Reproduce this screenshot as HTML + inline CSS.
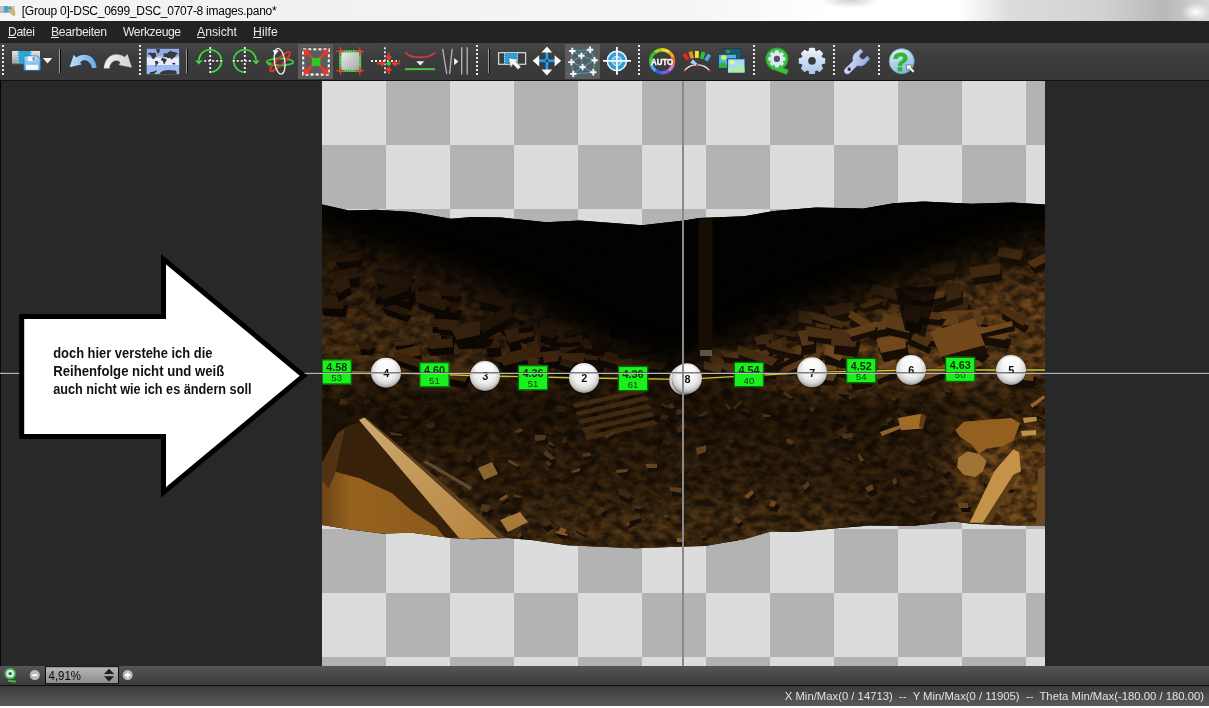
<!DOCTYPE html>
<html lang="de">
<head>
<meta charset="utf-8">
<title>[Group 0]-DSC_0699_DSC_0707-8 images.pano*</title>
<style>
html,body{margin:0;padding:0;}
body{width:1209px;height:708px;overflow:hidden;background:#282828;position:relative;font-family:"Liberation Sans","DejaVu Sans",sans-serif;}
.abs{position:absolute;}
svg,#title,.menu,#statustext{opacity:.999;}
#titlebar{left:0;top:0;width:1209px;height:21px;background:
 radial-gradient(ellipse 14px 9px at 1196px 12px,#ffffff 0%,rgba(255,255,255,0) 100%),
 radial-gradient(ellipse 30px 8px at 850px 0px,rgba(150,150,150,.45) 0%,rgba(120,120,120,0) 100%),
 linear-gradient(90deg,#f4f4f4 0px,#f1f1f1 300px,#f6f6f6 700px,#ffffff 830px,#ffffff 960px,#dcdcdc 1010px,#d2d2d2 1100px,#b8b8b8 1165px,#d8d8d8 1209px);}
#title{left:21.8px;top:4px;font-size:12px;color:#000;white-space:nowrap;letter-spacing:-0.26px;}
#menubar{left:0;top:21px;width:1209px;height:22px;background:#232323;}
.menu{position:absolute;top:4px;font-size:12.2px;color:#e8e8e8;white-space:nowrap;}
.menu u{text-decoration:underline;text-underline-offset:1px;}
#toolbar{left:0;top:43px;width:1209px;height:37px;background:linear-gradient(180deg,#474747,#3c3c3c 40%,#383838);border-bottom:1px solid #111;}
.sel{position:absolute;top:1px;height:35px;background:#5c5c5c;}
.grip{position:absolute;top:2px;width:2px;height:31px;background:repeating-linear-gradient(180deg,#e8e8e8 0px,#e8e8e8 2px,rgba(0,0,0,0) 2px,rgba(0,0,0,0) 4px);}
.sep{position:absolute;top:6px;width:1px;height:24px;background:#9a9a9a;border-right:1px solid #0c0c0c;}
#main{left:0;top:81px;width:1208px;height:585px;background:#282828;border-left:1px solid #050505;}
#canvas{left:322px;top:81px;width:723px;height:585px;overflow:hidden;
 background-color:#dcdcdc;
 background-image:conic-gradient(#b3b3b3 0 25%,#dcdcdc 0 50%,#b3b3b3 0 75%,#dcdcdc 0);
 background-size:128px 128px;background-position:0 0;}
#zoombar{left:0;top:666px;width:1209px;height:19px;background:linear-gradient(180deg,#555555,#3a3a3a);border-bottom:1px solid #0c0c0c;}
#status{left:0;top:686px;width:1209px;height:20px;background:linear-gradient(180deg,#3a3a3a,#5a5a5a);}
#statustext{right:5px;top:4px;font-size:11.3px;color:#e0e0e0;white-space:pre;}
#whitebot{left:0;top:706px;width:1209px;height:2px;background:#fff;}
</style>
</head>
<body>
<div id="titlebar" class="abs"></div>
<svg class="abs" style="left:0;top:0" width="20" height="21" viewBox="0 0 20 21">
<rect x="0" y="6" width="14.6" height="6.4" fill="#c4c4c4"/>
<rect x="3.8" y="6" width="4.6" height="6.4" fill="#34a8dc"/>
<rect x="0" y="11.6" width="12" height="1" fill="#9a9a9a"/>
<path d="M8.6,8 L10.4,6.6 L15,12.6 L14.6,15.4 L12,14.8 Z" fill="#d8c46a" stroke="#8a7a3a" stroke-width=".5"/>
<path d="M8.6,8 L10.4,6.6 L11.6,8.2 L9.8,9.6 Z" fill="#6a8a9a"/>
</svg>

<div id="title" class="abs">[Group 0]-DSC_0699_DSC_0707-8 images.pano*</div>
<div id="menubar" class="abs">
 <span class="menu" style="left:8px;letter-spacing:-0.4px"><u>D</u>atei</span>
 <span class="menu" style="left:51px;letter-spacing:-0.33px"><u>B</u>earbeiten</span>
 <span class="menu" style="left:123px;letter-spacing:-0.41px">Werkzeuge</span>
 <span class="menu" style="left:197px"><u>A</u>nsicht</span>
 <span class="menu" style="left:253px;letter-spacing:0.1px"><u>H</u>ilfe</span>
</div>
<div id="toolbar" class="abs">
 <div class="sel" style="left:298px;width:35px"></div>
 <div class="sel" style="left:565px;width:35px"></div>
 <div class="grip" style="left:2px"></div>
 <div class="grip" style="left:139px"></div>
 <div class="grip" style="left:476px"></div>
 <div class="grip" style="left:638px"></div>
 <div class="grip" style="left:753px"></div>
 <div class="grip" style="left:833px"></div>
 <div class="grip" style="left:878px"></div>
 <div class="sep" style="left:59px"></div>
 <div class="sep" style="left:186px"></div>
 <div class="sep" style="left:488px"></div>
 <svg class="abs" style="left:0;top:-43px" width="1209" height="81" viewBox="0 0 1209 81" font-family="'Liberation Sans',sans-serif">
<defs>
<linearGradient id="gfilm" x1="0" y1="0" x2="0" y2="1"><stop offset="0" stop-color="#e6e6e6"/><stop offset="1" stop-color="#9a9a9a"/></linearGradient>
<linearGradient id="gflop" x1="0" y1="0" x2="0" y2="1"><stop offset="0" stop-color="#a8d4f6"/><stop offset="1" stop-color="#6aaee8"/></linearGradient>
<linearGradient id="gundo" x1="0" y1="0" x2="1" y2="0"><stop offset="0" stop-color="#c4e0f4"/><stop offset="1" stop-color="#6ea8e0"/></linearGradient>
<linearGradient id="gredo" x1="0" y1="0" x2="1" y2="0"><stop offset="0" stop-color="#d4d4d4"/><stop offset="1" stop-color="#f0f0f0"/></linearGradient>
<linearGradient id="gcrop" x1="0" y1="0" x2="1" y2="1"><stop offset="0" stop-color="#ececec"/><stop offset="1" stop-color="#a4a4a4"/></linearGradient>
<linearGradient id="ggear" x1="0" y1="0" x2="0" y2="1"><stop offset="0" stop-color="#eef3fa"/><stop offset="1" stop-color="#a6c8ec"/></linearGradient>
<linearGradient id="gwr" x1="0" y1="0" x2="1" y2="1"><stop offset="0" stop-color="#e4eafa"/><stop offset="1" stop-color="#8ea6e4"/></linearGradient>
<linearGradient id="ghelp" x1="0" y1="0" x2="0.4" y2="1"><stop offset="0" stop-color="#e4f2fa"/><stop offset="1" stop-color="#8abce0"/></linearGradient>
</defs>
<g>
<rect x="12" y="51" width="28" height="13" fill="url(#gfilm)"/>
<rect x="17.6" y="51" width="14" height="13" fill="#2aa6d6"/>
<path d="M18,51V64M31.2,51V64" stroke="#dff6ff" stroke-width="1.2" stroke-dasharray="1.3 1.3" fill="none"/>
<rect x="12" y="63.2" width="28" height="1" fill="#7a7a7a"/>
<path d="M24,56 H37.3 L40.2,59 V70.2 H24 Z" fill="url(#gflop)" stroke="#3a78b8" stroke-width=".8"/>
<rect x="27.8" y="56.4" width="7.6" height="4.8" fill="#f2f8ff"/>
<rect x="32.6" y="56.8" width="2.2" height="3.8" fill="#808890"/>
<rect x="26" y="64.8" width="12.2" height="5" fill="#f4faff"/>
<path d="M42.8,58 H52.2 L47.5,63.4 Z" fill="#f4f4f4"/>
</g>
<path d="M68.9,67.8 L73.4,53.9 L76.3,57 C80.5,53.6 88,53.2 92.3,57.3 C95.6,60.5 97,64.5 97.1,68.6 L91.4,68.6 C91.2,65.2 89.6,62.2 86.6,61.1 C84.2,60.3 82.2,60.9 80.7,62.3 L82.2,64.9 Z" fill="url(#gundo)" stroke="#1c3c5c" stroke-width="1" stroke-linejoin="round"/>
<g transform="translate(200.9,0) scale(-1,1)"><path d="M68.9,67.8 L73.4,53.9 L76.3,57 C80.5,53.6 88,53.2 92.3,57.3 C95.6,60.5 97,64.5 97.1,68.6 L91.4,68.6 C91.2,65.2 89.6,62.2 86.6,61.1 C84.2,60.3 82.2,60.9 80.7,62.3 L82.2,64.9 Z" fill="url(#gredo)" stroke="#5a5a5a" stroke-opacity=".5" stroke-width=".6" stroke-linejoin="round"/></g>
<g>
<rect x="146.8" y="48.8" width="32.3" height="25.3" fill="#8fadea"/>
<rect x="146.8" y="57.4" width="32.3" height="7.8" fill="#e6ecfb"/>
<rect x="146.8" y="65.2" width="32.3" height="8.9" fill="#9fbcf0"/>
<rect x="146.8" y="56.4" width="32.3" height="1.2" fill="#b8caf2"/>
<path d="M147.9,53.2 L150.6,52.6 L152.8,53.2 L154.5,52.6 L156.3,53.7 L155.8,55.4 L156.7,56.5 L154.9,57.2 L154.5,58.7 L153.2,59.1 L151.9,58.3 L151.2,56.1 L149.7,54.8 L148.2,54.3Z M155.8,49.3 L159.8,49.1 L159.8,50.8 L158.9,53.0 L157.6,53.4 L156.7,51.3Z M154.9,61.1 L157.1,60.9 L158.7,62.2 L158.0,63.5 L156.9,64.8 L156.0,66.6 L155.2,66.6 L155.6,64.4 L155.2,62.6Z M162.8,53.9 L164.6,53.2 L166.8,53.4 L168.5,52.1 L170.7,50.8 L172.4,51.7 L174.6,52.1 L177.7,53.2 L177.9,54.1 L175.9,54.8 L175.5,56.5 L173.8,57.4 L172.4,59.1 L171.1,59.6 L170.3,57.8 L168.5,58.3 L166.8,57.4 L165.4,56.9 L162.8,56.5 L164.1,55.4Z M161.1,59.1 L162.4,57.8 L164.6,58.5 L166.3,59.1 L166.8,60.4 L165.7,61.3 L165.0,63.5 L163.9,64.2 L163.3,62.6 L162.8,60.9 L161.3,60.4Z M172.0,63.5 L173.8,62.6 L175.3,63.3 L175.3,64.6 L172.9,64.6Z M159.3,74.0 L161.1,71.8 L164.1,70.5 L168.5,70.1 L172.0,70.3 L175.5,70.5 L176.6,71.8 L176.6,74.0Z M149.3,74.0 L150.1,72.3 L154.1,71.6 L156.7,70.1 L156.5,71.8 L154.9,73.1 L154.5,74.0Z " fill="#38393e"/>
</g><g transform="translate(210.2,60.9) scale(1,1)">
<path d="M-11.3,1.5 A11.3,11.3 0 1 1 1,11.3" fill="none" stroke="#175a17" stroke-width="2.9" stroke-opacity=".55"/>
<path d="M-11.3,1.5 A11.3,11.3 0 1 1 1,11.3" fill="none" stroke="#4cd44c" stroke-width="1.7"/>
<path d="M-14,0H14M0,-14V14" stroke="#1e1e1e" stroke-opacity=".4" stroke-width="3.0999999999999996" stroke-dasharray="2 2" fill="none"/>
<path d="M-14,0H14M0,-14V14" stroke="#f2f2f2" stroke-width="1.9" stroke-dasharray="2 2" fill="none"/>
<path d="M-14.9,-0.4 L-7.9,-0.4 L-11.3,4.2 Z" fill="#4cd44c" stroke="#175a17" stroke-width=".5"/>
</g>
<g transform="translate(244.8,60.9) scale(-1,1)">
<path d="M-11.3,1.5 A11.3,11.3 0 1 1 1,11.3" fill="none" stroke="#175a17" stroke-width="2.9" stroke-opacity=".55"/>
<path d="M-11.3,1.5 A11.3,11.3 0 1 1 1,11.3" fill="none" stroke="#4cd44c" stroke-width="1.7"/>
<path d="M-14,0H14M0,-14V14" stroke="#1e1e1e" stroke-opacity=".4" stroke-width="3.0999999999999996" stroke-dasharray="2 2" fill="none"/>
<path d="M-14,0H14M0,-14V14" stroke="#f2f2f2" stroke-width="1.9" stroke-dasharray="2 2" fill="none"/>
<path d="M-14.9,-0.4 L-7.9,-0.4 L-11.3,4.2 Z" fill="#4cd44c" stroke="#175a17" stroke-width=".5"/>
</g>
<g fill="none">
<ellipse cx="280" cy="62" rx="13.2" ry="3.5" stroke="#3cc83c" stroke-width="1.8"/>
<ellipse cx="280" cy="61.6" rx="13.4" ry="3.2" stroke="#dc3828" stroke-width="1.9" transform="rotate(-44 280 61.6)"/>
<ellipse cx="279.6" cy="61.2" rx="5.2" ry="13" stroke="#f4f4f4" stroke-width="1.25" transform="rotate(-8 279.6 61.2)"/>
<path d="M272.6,50 L278.8,50.6 L275.2,55 Z" fill="#f8f8f8"/>
<path d="M266.6,62 L271.8,62.4 L268.8,66.6 Z" fill="#3cc83c"/>
</g>
<path d="M303.2,49.3 H328.8 V74.5 H303.2 Z" stroke="#1e1e1e" stroke-opacity=".4" stroke-width="3.5" stroke-dasharray="3 2.08" fill="none"/>
<path d="M303.2,49.3 H328.8 V74.5 H303.2 Z" stroke="#f2f2f2" stroke-width="2.3" stroke-dasharray="3 2.08" fill="none"/>
<g stroke="#e8392e" stroke-width="2.6" fill="#e8392e">
<path d="M312.6,58.4L307.5,53.3"/>
<path d="M303.5,49.3 L310.9,50.099999999999994 L304.3,56.699999999999996 Z" stroke="none"/>
<path d="M319.6,58.4L324.70000000000005,53.3"/>
<path d="M328.70000000000005,49.3 L321.30000000000007,50.099999999999994 L327.90000000000003,56.699999999999996 Z" stroke="none"/>
<path d="M312.6,65.4L307.5,70.5"/>
<path d="M303.5,74.5 L310.9,73.7 L304.3,67.1 Z" stroke="none"/>
<path d="M319.6,65.4L324.70000000000005,70.5"/>
<path d="M328.70000000000005,74.5 L321.30000000000007,73.7 L327.90000000000003,67.1 Z" stroke="none"/>
</g>
<rect x="311.9" y="57.9" width="8.5" height="8" fill="#2fca1e"/>
<rect x="340.3" y="51.4" width="19.8" height="19.4" fill="url(#gcrop)" stroke="#5cdc5c" stroke-width="2.2"/>
<path d="M340.3,51.4 H360.1 V70.8 H340.3 Z" fill="none" stroke="#1c5a1c" stroke-width="2.2" stroke-dasharray="0.8 1.6"  stroke-opacity=".5"/>
<path d="M336,51.4H344.6M340.6,47V55.4 M355.6,51.4H364M359.8,47V55.4 M336,70.6H344.6M340.6,66.4V75 M355.6,70.6H364M359.8,66.4V75" stroke="#e8392e" stroke-width="1.2" fill="none"/>
<path d="M371,61H399.4M385,47.2V74.8" stroke="#1e1e1e" stroke-opacity=".4" stroke-width="3.0" stroke-dasharray="2 2" fill="none"/>
<path d="M371,61H399.4M385,47.2V74.8" stroke="#f2f2f2" stroke-width="1.8" stroke-dasharray="2 2" fill="none"/>
<g fill="#e8392e">
<path d="M385.09999999999997,56.3 h7.2 l-3.6,4.6 Z M387.59999999999997,52.9 h2.2 v4 h-2.2Z"/>
<path d="M385.09999999999997,70.7 h7.2 l-3.6,-4.6 Z M387.59999999999997,74.1 h2.2 v-4 h-2.2Z"/>
<path d="M381.3,59.9 v7.2 l4.6,-3.6 Z M376.9,62.4 v2.2 h5 v-2.2Z"/>
<path d="M396.09999999999997,59.9 v7.2 l-4.6,-3.6 Z M399.7,62.4 v2.2 h-4 v-2.2Z"/>
</g>
<circle cx="388.7" cy="63.5" r="2.2" fill="#36c836"/>
<path d="M405.8,52.8 C411,58.8 429,58.8 434.4,52.8" fill="none" stroke="#c83c3c" stroke-width="2" stroke-linecap="round"/>
<path d="M416.2,61.2 H424.2 L420.2,65.6 Z" fill="#f6f6f6"/>
<rect x="405" y="68.2" width="30" height="1.9" fill="#44cc44"/>
<path d="M442.6,48.8 L446.8,74 M452.2,48.8 L449.6,74 M461.7,47.2 V74.4 M467.2,47.2 V74.4" stroke="#b0b0b0" stroke-width="1.4" fill="none"/>
<path d="M454.1,58 L458.4,61.6 L454.1,65.3 Z" fill="#f6f6f6"/><rect x="498.6" y="52.7" width="27" height="11.6" fill="#3a3a3a" stroke="#d0d0d0" stroke-width="1.3"/>
<rect x="504.2" y="53.3" width="13.6" height="10.4" fill="#28a0e0"/>
<path d="M504.6,53.3V63.7M517.4,53.3V63.7" stroke="#e6f6ff" stroke-width="1" stroke-dasharray="1.2 1.2" fill="none"/>
<path d="M508.6,58 L518.6,59.4 L516,61.6 L520.8,67 L518,69.6 L513,64.2 L510.6,67.4 Z" fill="#f8f8f8" stroke="#555" stroke-width=".5"/>
<path d="M539,60.8H555M546.9,52V70" stroke="#1a3a50" stroke-width="4.4" fill="none"/>
<path d="M539,60.8H555M546.9,52V70" stroke="#2b9ad8" stroke-width="3" fill="none"/>
<path d="M546.9,46.4 L552.3,52.4 H541.5Z M546.9,75.4 L552.3,69.4 H541.5Z M532.6,60.8 L539.2,55.199999999999996 V66.39999999999999Z M561.2,60.8 L554.6,55.199999999999996 V66.39999999999999Z" fill="#f8f8f8"/>
<rect x="545.9" y="59.8" width="2" height="2" fill="#0c2a40"/>
<path d="M572.3,51L590.1,49.8M572.3,51L581.4,55.7M590.1,49.8L581.4,55.7M572.3,51L571.4,62.1M581.4,55.7L571.4,62.1M581.4,55.7L594.6,60.3M590.1,49.8L594.6,60.3M571.4,62.1L582.6,67.1M594.6,60.3L582.6,67.1M571.4,62.1L573.3,73.9M582.6,67.1L573.3,73.9M582.6,67.1L593.3,72.3M594.6,60.3L593.3,72.3M573.3,73.9L593.3,72.3M581.4,55.7L582.6,67.1" stroke="#3d9cc8" stroke-width="1.1" fill="none"/>
<path d="M569.0999999999999,51H575.5M572.3,47.8V54.2M586.9,49.8H593.3000000000001M590.1,46.599999999999994V53.0M578.1999999999999,55.7H584.6M581.4,52.5V58.900000000000006M568.1999999999999,62.1H574.6M571.4,58.9V65.3M591.4,60.3H597.8000000000001M594.6,57.099999999999994V63.5M579.4,67.1H585.8000000000001M582.6,63.89999999999999V70.3M570.0999999999999,73.9H576.5M573.3,70.7V77.10000000000001M590.0999999999999,72.3H596.5M593.3,69.1V75.5" stroke="#fafafa" stroke-width="1.9" fill="none"/>
<circle cx="616.9" cy="60.9" r="9.6" fill="#2e9ed8" stroke="#e8f8ff" stroke-width="1.5"/>
<circle cx="616.9" cy="60.9" r="4.6" fill="#56b4e2" stroke="#c8ecfc" stroke-width="1.3"/>
<path d="M603,60.9H631M616.9,47V74.8" stroke="#f4fcff" stroke-width="1.9" fill="none"/>
<path d="M661.90,49.70 A11.5,11.5 0 0 1 669.02,52.02" stroke="#f0e020" stroke-width="3.4" fill="none"/>
<path d="M668.70,51.78 A11.5,11.5 0 0 1 673.10,57.84" stroke="#f0a828" stroke-width="3.4" fill="none"/>
<path d="M672.97,57.46 A11.5,11.5 0 0 1 672.97,64.94" stroke="#f06a28" stroke-width="3.4" fill="none"/>
<path d="M673.10,64.56 A11.5,11.5 0 0 1 668.70,70.62" stroke="#d878d8" stroke-width="3.4" fill="none"/>
<path d="M669.02,70.38 A11.5,11.5 0 0 1 661.90,72.70" stroke="#7a60e0" stroke-width="3.4" fill="none"/>
<path d="M662.30,72.70 A11.5,11.5 0 0 1 655.18,70.38" stroke="#3060e0" stroke-width="3.4" fill="none"/>
<path d="M655.50,70.62 A11.5,11.5 0 0 1 651.10,64.56" stroke="#4aa8f0" stroke-width="3.4" fill="none"/>
<path d="M651.23,64.94 A11.5,11.5 0 0 1 651.23,57.46" stroke="#38c848" stroke-width="3.4" fill="none"/>
<path d="M651.10,57.84 A11.5,11.5 0 0 1 655.50,51.78" stroke="#38c020" stroke-width="3.4" fill="none"/>
<path d="M655.18,52.02 A11.5,11.5 0 0 1 662.30,49.70" stroke="#a0d820" stroke-width="3.4" fill="none"/>
<text x="662.1" y="64.5" font-size="9.2" font-weight="bold" fill="#fff" text-anchor="middle" textLength="22.4" lengthAdjust="spacingAndGlyphs" stroke="#fff" stroke-width=".35">AUTO</text>
<rect x="684.1" y="53.1" width="3.8" height="7" fill="#e8281e" transform="rotate(-32 686 56.6)"/>
<rect x="689.4" y="51.4" width="3.8" height="7" fill="#f08a28" transform="rotate(-16 691.3 54.9)"/>
<rect x="695.0" y="50.9" width="3.8" height="7" fill="#f4e628" transform="rotate(0 696.9 54.4)"/>
<rect x="700.7" y="51.8" width="3.8" height="7" fill="#34c034" transform="rotate(16 702.6 55.3)"/>
<rect x="705.8000000000001" y="54.1" width="3.8" height="7" fill="#48a8e0" transform="rotate(32 707.7 57.6)"/>
<path d="M684.2,70.8 C688,66 692,64.6 697,64.8 C702,64.6 706,66 709.8,70.8" stroke="#f4f4f4" stroke-width="1.3" fill="none"/>
<circle cx="684.4" cy="70.8" r="1.2" fill="#c82828"/><circle cx="709.6" cy="70.8" r="1.2" fill="#c82828"/>
<path d="M690.2,62.8 L692.8,59.2 L698.2,64.4 L697,66.2 Z" fill="#b8c6ee"/>
<circle cx="697.2" cy="65.2" r="1.2" fill="#c83a3a"/>
<rect x="723.4" y="48.6" width="17.6" height="12" fill="#1d5a6e" stroke="#143c48" stroke-width=".8"/>
<circle cx="728" cy="51.6" r="1.7" fill="#7a8a2a"/>
<rect x="718.6" y="54.2" width="18" height="13.8" fill="#48b6e8" stroke="#174654" stroke-width="1"/>
<circle cx="723.8" cy="57.6" r="2.5" fill="#e4f23a"/>
<path d="M719.1,67.5 V64.6 C721.5,62 724,62 726.6,64.4 L729,67.5 Z" fill="#34b43c"/>
<rect x="727.6" y="58.8" width="17.4" height="14.2" fill="#a6dcf2" stroke="#174654" stroke-width="1"/>
<circle cx="732" cy="62.2" r="2.3" fill="#f2f4a0"/>
<path d="M728.1,72.5 V68.4 C730,66.6 732,67 734,68.4 C736,66 738.4,64 741,65.2 L744.5,67.6 V72.5 Z" fill="#b2e8aa"/><path d="M771.6,66.4 L787.6,72.2" stroke="#1f8a28" stroke-width="5.6" fill="none"/>
<circle cx="776.9" cy="58.9" r="11.2" fill="#3cc040" stroke="#1f8a28" stroke-width=".8"/>
<path d="M771.6,66.4 L787.4,72.1" stroke="#3cc040" stroke-width="4.4" fill="none"/>
<path d="M775.49,50.82 L778.31,50.82 L778.51,52.81 L780.06,53.45 L781.62,52.19 L783.61,54.18 L782.35,55.74 L782.99,57.29 L784.98,57.49 L784.98,60.31 L782.99,60.51 L782.35,62.06 L783.61,63.62 L781.62,65.61 L780.06,64.35 L778.51,64.99 L778.31,66.98 L775.49,66.98 L775.29,64.99 L773.74,64.35 L772.18,65.61 L770.19,63.62 L771.45,62.06 L770.81,60.51 L768.82,60.31 L768.82,57.49 L770.81,57.29 L771.45,55.74 L770.19,54.18 L772.18,52.19 L773.74,53.45 L775.29,52.81Z M773.8,58.9 a3.1,3.1 0 1 0 6.2,0 a3.1,3.1 0 1 0 -6.2,0Z" fill="#dde9f8" fill-rule="evenodd" stroke-linejoin="round" stroke="#dde9f8" stroke-width="1"/>
<circle cx="776.9" cy="58.9" r="3.1" fill="#505458"/>
<path d="M809.83,48.49 L814.17,48.49 L814.56,51.23 L817.02,52.25 L819.25,50.59 L822.31,53.65 L820.65,55.88 L821.67,58.34 L824.41,58.73 L824.41,63.07 L821.67,63.46 L820.65,65.92 L822.31,68.15 L819.25,71.21 L817.02,69.55 L814.56,70.57 L814.17,73.31 L809.83,73.31 L809.44,70.57 L806.98,69.55 L804.75,71.21 L801.69,68.15 L803.35,65.92 L802.33,63.46 L799.59,63.07 L799.59,58.73 L802.33,58.34 L803.35,55.88 L801.69,53.65 L804.75,50.59 L806.98,52.25 L809.44,51.23Z M807.4,60.9 a4.6,4.6 0 1 0 9.2,0 a4.6,4.6 0 1 0 -9.2,0Z" fill="url(#ggear)" fill-rule="evenodd" stroke-linejoin="round" stroke="url(#ggear)" stroke-width="1.6"/>
<g transform="translate(845,73.2) rotate(-44)">
<path d="M3.3,-3.3 H14 C15.5,-5.5 17.5,-7.4 20.5,-7.6 L28,-7 L28.2,-3 L23.5,-2.8 C21.2,-2 21.2,2 23.5,2.8 L28.2,3 L28,7 L20.5,7.6 C17.5,7.4 15.5,5.5 14,3.3 H3.3 C-1.1,3.3 -1.1,-3.3 3.3,-3.3 Z" fill="url(#gwr)" stroke="#56648e" stroke-width=".5" stroke-linejoin="round"/>
<circle cx="5.8" cy="0" r="1.7" fill="#34363c"/>
</g>
<circle cx="901.7" cy="61.2" r="12.6" fill="url(#ghelp)" stroke="#6a90a8" stroke-width=".8"/>
<text x="900.5" y="70.6" font-size="26.5" font-weight="bold" fill="#2cb82c" stroke="#2cb82c" stroke-width=".9" text-anchor="middle">?</text>
<path d="M906,64.6 L912.6,65.4 L910.8,67 L914.6,71 L912.8,72.8 L909,68.8 L907.2,70.8 Z" fill="#fafafa" stroke="#444" stroke-width=".6" stroke-linejoin="round"/>
</svg>
</div>
<div id="main" class="abs"></div>
<div id="canvas" class="abs">

</div>
<svg class="abs" style="left:0;top:0" width="1209" height="708" viewBox="0 0 1209 708">
<defs>
<clipPath id="panoclip"><path d="M322,204.4 L349,210.4 L376,209.8 L412,212 L451,218.7 L472,217 L501.6,217.5 L546.5,222.3 L579.5,220.5 L642,225.3 L684,220.5 L699,218 L744,216.3 L774,211 L816,207.4 L863.6,208.6 L893.6,203.2 L923.5,201.4 L971.4,203.8 L1013,202.6 L1045,204.4
 L1045,525.5 L1013,525.5 L971.4,523.8 L953.5,521.4 L911.5,526 L869.6,525.5 L834,528.5 L795,532 L771,531.5 L744,539.3 L705,546 L684,546.5 L636,548.3 L606.4,547 L567.5,545.3 L531.6,540 L507.6,538 L472,539.3 L451,538 L412,532.8 L382,533.4 L352,529.8 L322,525 Z"/></clipPath>
<filter id="b20" color-interpolation-filters="sRGB" x="-30%" y="-30%" width="160%" height="160%"><feGaussianBlur stdDeviation="16"/></filter>
<filter id="b1" color-interpolation-filters="sRGB" x="-5%" y="-5%" width="110%" height="110%"><feGaussianBlur stdDeviation="0.7"/></filter>
<filter id="tex" x="0" y="0" width="100%" height="100%" color-interpolation-filters="sRGB">
 <feTurbulence type="fractalNoise" baseFrequency="0.09 0.13" numOctaves="3" seed="7" result="n"/>
 <feColorMatrix in="n" type="matrix" values="2.2 0 0 0 -0.6  2.2 0 0 0 -0.6  2.2 0 0 0 -0.6  0 0 0 0 1" result="g"/>
 <feComposite in="SourceGraphic" in2="g" operator="arithmetic" k1="0.9" k2="0.55" k3="0" k4="0"/>
</filter>
<!-- brightness mask for rubble slabs: same shape as base light -->
<mask id="lm" maskUnits="userSpaceOnUse" x="322" y="195" width="723" height="360">
 <g filter="url(#b20)">
  <polygon points="280,222 442,268 501,292 561,322 609,350 657,366 681,366 705,352 741,334 800,310 860,288 920,268 980,248 1080,220 1080,600 280,600" fill="#fff"/>
 </g>
</mask>
</defs>
<g clip-path="url(#panoclip)">
<rect x="322" y="195" width="723" height="360" fill="#020201"/>
<g filter="url(#tex)">
<rect x="322" y="195" width="723" height="360" fill="#020201"/>
<g filter="url(#b20)">
<polygon points="280,225 442,272 501,295 561,326 609,354 657,368 681,368 705,356 741,337 800,313 860,292 920,272 980,252 1080,225 1080,600 280,600" fill="#261809"/>
<polygon points="280,300 430,315 540,372 280,385" fill="#38240f"/>
<polygon points="770,368 860,322 960,288 1080,272 1080,388 770,392" fill="#4c3013"/>
<polygon points="300,468 420,478 500,552 300,560" fill="#6e461a"/>
<polygon points="950,410 1080,410 1080,540 965,540" fill="#553614"/>
<polygon points="520,505 860,500 860,560 520,560" fill="#38250e"/>
<polygon id="darkband" points="300,392 1080,388 1080,432 300,436" fill="#0c0703" fill-opacity=".45"/>
</g>
</g>
<g mask="url(#lm)" filter="url(#b1)">
<polygon points="458,338 495,337 493,348 459,349" fill="#0c0703"/>
<polygon points="456,332 494,330 491,341 458,343" fill="#2f1c0b"/>
<polygon points="591,362 605,364 602,377 592,375" fill="#0c0703"/>
<polygon points="589,353 604,355 601,367 590,366" fill="#3f260f"/>
<polygon points="321,304 348,305 346,317 324,316" fill="#0c0703"/>
<polygon points="320,295 345,296 343,309 321,308" fill="#2c1b0b"/>
<polygon points="555,338 574,340 571,348 554,346" fill="#0c0703"/>
<polygon points="552,332 572,335 570,343 553,340" fill="#1e1207"/>
<polygon points="612,359 652,362 647,369 616,366" fill="#0c0703"/>
<polygon points="610,353 650,356 645,363 615,360" fill="#221408"/>
<polygon points="399,280 415,279 413,292 400,292" fill="#0c0703"/>
<polygon points="397,272 413,271 411,284 398,284" fill="#1a1006"/>
<polygon points="379,290 416,298 411,311 375,304" fill="#0c0703"/>
<polygon points="376,282 415,289 408,302 374,296" fill="#211408"/>
<polygon points="399,355 420,346 422,354 404,361" fill="#0c0703"/>
<polygon points="397,350 418,341 419,348 402,356" fill="#29190a"/>
<polygon points="511,363 528,366 525,373 510,371" fill="#0c0703"/>
<polygon points="508,358 526,361 523,368 507,366" fill="#452911"/>
<polygon points="519,340 535,336 534,341 521,344" fill="#0c0703"/>
<polygon points="517,336 533,331 533,336 519,340" fill="#35200d"/>
<polygon points="331,281 360,277 359,287 338,289" fill="#0c0703"/>
<polygon points="330,272 358,268 357,278 336,281" fill="#261709"/>
<polygon points="441,333 457,339 454,346 441,340" fill="#0c0703"/>
<polygon points="440,327 456,333 453,340 438,334" fill="#39220e"/>
<polygon points="554,371 569,372 568,384 555,383" fill="#0c0703"/>
<polygon points="552,364 567,364 566,376 553,376" fill="#3b240e"/>
<polygon points="545,359 581,370 576,375 544,365" fill="#0c0703"/>
<polygon points="543,353 579,364 574,369 542,359" fill="#3b240e"/>
<polygon points="515,347 530,352 527,361 512,356" fill="#0c0703"/>
<polygon points="512,339 528,345 524,353 511,348" fill="#3d250f"/>
<polygon points="563,328 592,331 590,340 563,338" fill="#0c0703"/>
<polygon points="561,322 591,325 588,334 561,331" fill="#190f06"/>
<polygon points="376,278 413,286 408,298 378,291" fill="#0c0703"/>
<polygon points="374,270 410,279 405,290 375,283" fill="#211408"/>
<polygon points="443,335 465,341 463,345 442,339" fill="#0c0703"/>
<polygon points="442,330 463,336 461,340 441,335" fill="#2f1d0b"/>
<polygon points="382,307 412,316 407,322 386,315" fill="#0c0703"/>
<polygon points="381,300 410,310 406,316 383,308" fill="#261709"/>
<polygon points="499,330 533,324 534,331 504,336" fill="#0c0703"/>
<polygon points="497,325 532,320 531,327 502,331" fill="#1f1307"/>
<polygon points="518,360 552,348 551,363 527,371" fill="#0c0703"/>
<polygon points="516,351 549,339 550,354 526,362" fill="#37210d"/>
<polygon points="427,348 454,345 454,354 431,356" fill="#0c0703"/>
<polygon points="424,341 452,338 453,347 430,349" fill="#3a230e"/>
<polygon points="524,367 548,373 545,380 525,374" fill="#0c0703"/>
<polygon points="523,359 546,366 542,373 523,367" fill="#452a11"/>
<polygon points="548,336 585,337 581,349 548,348" fill="#0c0703"/>
<polygon points="546,327 583,328 580,339 547,338" fill="#2d1b0b"/>
<polygon points="497,364 521,353 519,358 501,366" fill="#0c0703"/>
<polygon points="495,359 519,349 518,354 499,362" fill="#3e250f"/>
<polygon points="555,362 587,368 578,383 553,379" fill="#0c0703"/>
<polygon points="553,353 585,359 576,374 550,370" fill="#37210d"/>
<polygon points="600,356 621,360 618,370 597,366" fill="#0c0703"/>
<polygon points="598,350 619,354 616,364 595,359" fill="#37210d"/>
<polygon points="486,346 500,346 502,357 488,357" fill="#0c0703"/>
<polygon points="484,337 499,337 499,348 487,348" fill="#301d0c"/>
<polygon points="636,374 657,373 658,380 640,381" fill="#0c0703"/>
<polygon points="634,367 655,366 656,374 637,374" fill="#2f1c0b"/>
<polygon points="360,347 376,348 373,355 361,355" fill="#0c0703"/>
<polygon points="359,342 373,342 371,350 359,349" fill="#2e1c0b"/>
<polygon points="395,292 422,288 420,297 400,300" fill="#0c0703"/>
<polygon points="392,286 420,282 418,291 397,294" fill="#211408"/>
<polygon points="522,363 543,367 538,379 519,375" fill="#0c0703"/>
<polygon points="521,355 540,359 535,371 517,367" fill="#412710"/>
<polygon points="395,346 414,344 412,350 397,351" fill="#0c0703"/>
<polygon points="392,342 413,340 411,345 395,346" fill="#3d250f"/>
<polygon points="622,374 639,374 639,382 626,382" fill="#0c0703"/>
<polygon points="621,367 638,367 637,375 624,375" fill="#442911"/>
<polygon points="509,314 526,322 522,326 509,319" fill="#0c0703"/>
<polygon points="507,308 524,316 520,320 507,314" fill="#28180a"/>
<polygon points="470,335 494,339 490,347 470,343" fill="#0c0703"/>
<polygon points="468,327 493,332 489,340 469,336" fill="#211408"/>
<polygon points="481,298 518,307 511,317 480,309" fill="#0c0703"/>
<polygon points="479,289 515,299 509,309 478,301" fill="#201408"/>
<polygon points="618,363 649,375 646,383 615,373" fill="#0c0703"/>
<polygon points="615,355 647,366 643,375 614,364" fill="#321e0c"/>
<polygon points="432,324 447,323 447,333 433,333" fill="#0c0703"/>
<polygon points="430,318 445,317 444,327 431,327" fill="#2f1c0b"/>
<polygon points="443,369 473,376 466,389 439,383" fill="#0c0703"/>
<polygon points="441,362 471,369 465,382 437,376" fill="#452a11"/>
<polygon points="441,294 462,296 459,306 441,303" fill="#0c0703"/>
<polygon points="438,285 459,288 458,297 439,295" fill="#211408"/>
<polygon points="563,338 597,325 598,332 569,342" fill="#0c0703"/>
<polygon points="560,333 595,320 596,327 567,337" fill="#1e1207"/>
<polygon points="432,307 463,310 458,320 435,319" fill="#0c0703"/>
<polygon points="431,300 462,303 456,313 433,312" fill="#221408"/>
<polygon points="618,371 632,368 636,378 624,380" fill="#0c0703"/>
<polygon points="615,362 631,358 634,369 621,371" fill="#412710"/>
<polygon points="547,356 584,342 585,354 556,365" fill="#0c0703"/>
<polygon points="546,348 582,334 584,345 555,357" fill="#2e1c0b"/>
<polygon points="541,342 560,346 558,356 540,352" fill="#0c0703"/>
<polygon points="538,335 559,339 557,349 537,345" fill="#29190a"/>
<polygon points="577,359 600,358 601,366 579,366" fill="#0c0703"/>
<polygon points="575,353 599,353 598,360 576,360" fill="#36200d"/>
<polygon points="613,344 629,343 628,352 616,354" fill="#0c0703"/>
<polygon points="611,339 627,338 626,347 613,348" fill="#1d1107"/>
<polygon points="442,325 461,327 456,336 440,335" fill="#0c0703"/>
<polygon points="439,319 459,321 454,331 438,329" fill="#321e0c"/>
<polygon points="398,357 421,352 422,363 402,367" fill="#0c0703"/>
<polygon points="397,350 420,345 421,355 399,360" fill="#452a11"/>
<polygon points="336,263 363,258 361,266 341,270" fill="#0c0703"/>
<polygon points="333,257 362,251 360,260 339,263" fill="#231508"/>
<polygon points="550,338 567,333 568,343 552,348" fill="#0c0703"/>
<polygon points="547,332 564,327 565,337 550,342" fill="#2a1a0a"/>
<polygon points="586,344 607,348 603,357 585,354" fill="#0c0703"/>
<polygon points="584,338 606,342 601,351 583,348" fill="#2f1d0b"/>
<polygon points="498,366 526,358 530,368 506,375" fill="#0c0703"/>
<polygon points="497,357 524,349 527,360 504,366" fill="#38220e"/>
<polygon points="635,364 668,368 663,374 633,371" fill="#0c0703"/>
<polygon points="632,359 667,364 661,370 632,366" fill="#331f0c"/>
<polygon points="567,358 586,358 585,364 568,364" fill="#0c0703"/>
<polygon points="564,353 584,353 583,359 566,359" fill="#38220e"/>
<polygon points="550,358 588,363 585,370 550,365" fill="#0c0703"/>
<polygon points="547,352 585,356 583,363 548,359" fill="#3c240f"/>
<polygon points="552,362 576,368 573,374 555,369" fill="#0c0703"/>
<polygon points="550,356 575,362 571,368 552,363" fill="#2c1b0b"/>
<polygon points="335,289 348,281 352,294 339,302" fill="#0c0703"/>
<polygon points="332,282 347,274 351,287 338,294" fill="#2c1b0b"/>
<polygon points="380,297 411,285 411,297 385,308" fill="#0c0703"/>
<polygon points="378,290 409,277 409,290 383,300" fill="#1f1307"/>
<polygon points="396,357 432,368 424,375 398,366" fill="#0c0703"/>
<polygon points="393,351 429,362 423,369 396,360" fill="#3b230e"/>
<polygon points="479,331 513,312 514,324 484,340" fill="#0c0703"/>
<polygon points="476,323 511,305 513,316 483,333" fill="#201308"/>
<polygon points="418,297 451,308 447,318 419,309" fill="#0c0703"/>
<polygon points="415,290 450,301 444,311 416,302" fill="#28180a"/>
<polygon points="592,341 611,339 613,351 593,353" fill="#0c0703"/>
<polygon points="589,333 610,331 611,343 591,345" fill="#190f06"/>
<polygon points="616,351 650,348 650,356 620,359" fill="#0c0703"/>
<polygon points="614,346 649,343 649,351 618,354" fill="#201308"/>
<polygon points="549,344 581,342 581,346 551,348" fill="#0c0703"/>
<polygon points="548,339 579,337 579,342 550,343" fill="#261709"/>
<polygon points="506,340 519,337 522,349 511,352" fill="#0c0703"/>
<polygon points="504,331 518,327 520,340 509,343" fill="#321e0c"/>
<polygon points="543,330 559,336 555,347 540,342" fill="#0c0703"/>
<polygon points="540,322 558,329 554,339 538,334" fill="#221408"/>
<polygon points="543,358 562,356 559,367 547,369" fill="#0c0703"/>
<polygon points="542,352 560,350 558,361 544,363" fill="#3d250f"/>
<polygon points="452,336 483,330 483,343 459,348" fill="#0c0703"/>
<polygon points="450,328 480,321 480,335 457,340" fill="#35200d"/>
<polygon points="926,337 940,338 937,347 924,347" fill="#160e05"/>
<polygon points="923,331 938,332 935,341 922,341" fill="#513415"/>
<polygon points="953,373 981,365 982,372 958,379" fill="#160e05"/>
<polygon points="950,367 979,359 981,366 955,373" fill="#6a441b"/>
<polygon points="913,296 928,299 928,307 912,305" fill="#160e05"/>
<polygon points="911,291 927,293 925,301 911,299" fill="#442b11"/>
<polygon points="1002,312 1029,326 1025,333 1002,319" fill="#160e05"/>
<polygon points="1001,304 1027,319 1023,326 1000,312" fill="#4a2f13"/>
<polygon points="771,364 805,349 803,359 774,373" fill="#160e05"/>
<polygon points="768,359 802,344 801,354 772,367" fill="#593917"/>
<polygon points="942,312 970,304 971,318 947,324" fill="#160e05"/>
<polygon points="939,304 969,296 968,309 946,316" fill="#37230e"/>
<polygon points="884,322 915,313 915,317 888,325" fill="#160e05"/>
<polygon points="882,317 913,309 912,313 886,320" fill="#503314"/>
<polygon points="941,321 983,318 981,332 944,335" fill="#160e05"/>
<polygon points="939,312 981,309 979,323 941,326" fill="#623f19"/>
<polygon points="799,319 833,325 829,336 801,331" fill="#160e05"/>
<polygon points="798,310 832,316 827,327 799,322" fill="#402910"/>
<polygon points="825,314 858,308 856,319 832,324" fill="#160e05"/>
<polygon points="823,307 855,301 853,312 829,317" fill="#301e0c"/>
<polygon points="844,362 864,367 856,381 839,377" fill="#160e05"/>
<polygon points="841,353 861,359 854,373 838,369" fill="#68421b"/>
<polygon points="799,340 817,338 816,353 804,355" fill="#160e05"/>
<polygon points="798,331 814,329 814,344 802,346" fill="#553616"/>
<polygon points="1013,371 1038,384 1032,388 1013,376" fill="#160e05"/>
<polygon points="1012,366 1036,379 1030,382 1010,371" fill="#623e19"/>
<polygon points="1030,267 1059,253 1061,262 1035,274" fill="#160e05"/>
<polygon points="1027,262 1056,248 1058,256 1034,268" fill="#4f3214"/>
<polygon points="930,375 957,372 955,377 934,379" fill="#160e05"/>
<polygon points="928,370 954,367 952,372 932,375" fill="#5b3a17"/>
<polygon points="919,362 948,375 941,379 919,368" fill="#160e05"/>
<polygon points="918,356 945,369 939,374 916,363" fill="#5d3b18"/>
<polygon points="874,290 903,297 898,305 871,299" fill="#160e05"/>
<polygon points="872,284 902,291 896,300 870,293" fill="#301e0c"/>
<polygon points="1004,379 1020,380 1018,387 1007,386" fill="#160e05"/>
<polygon points="1002,372 1017,373 1017,381 1005,379" fill="#7f5121"/>
<polygon points="959,320 988,325 983,335 960,330" fill="#160e05"/>
<polygon points="957,312 985,316 981,326 958,321" fill="#5c3b18"/>
<polygon points="952,358 987,350 986,358 959,364" fill="#160e05"/>
<polygon points="949,353 985,345 984,352 956,358" fill="#633f19"/>
<polygon points="762,342 775,340 775,352 764,353" fill="#160e05"/>
<polygon points="759,335 773,333 773,345 761,346" fill="#3c260f"/>
<polygon points="776,333 800,337 796,342 777,339" fill="#160e05"/>
<polygon points="775,329 798,332 794,337 776,334" fill="#37230e"/>
<polygon points="741,368 779,365 776,379 744,382" fill="#160e05"/>
<polygon points="740,360 777,356 774,370 741,373" fill="#462d12"/>
<polygon points="741,351 773,364 767,368 743,359" fill="#160e05"/>
<polygon points="739,347 772,359 766,364 740,354" fill="#442b11"/>
<polygon points="955,350 977,346 977,353 958,357" fill="#160e05"/>
<polygon points="954,345 974,340 975,348 957,352" fill="#633f19"/>
<polygon points="838,352 853,358 849,365 837,360" fill="#160e05"/>
<polygon points="836,345 851,352 848,359 835,353" fill="#65411a"/>
<polygon points="770,350 789,344 790,356 775,362" fill="#160e05"/>
<polygon points="768,343 786,336 787,349 773,354" fill="#3b260f"/>
<polygon points="767,352 784,346 784,361 772,367" fill="#160e05"/>
<polygon points="766,344 781,338 782,353 770,359" fill="#462c12"/>
<polygon points="811,318 849,329 843,334 813,325" fill="#160e05"/>
<polygon points="809,311 848,323 841,328 812,319" fill="#472e12"/>
<polygon points="960,325 973,318 977,328 966,334" fill="#160e05"/>
<polygon points="958,319 972,311 975,321 965,328" fill="#472d12"/>
<polygon points="929,301 963,291 963,304 935,313" fill="#160e05"/>
<polygon points="927,294 960,283 962,297 933,306" fill="#37230e"/>
<polygon points="817,327 833,330 831,334 819,332" fill="#160e05"/>
<polygon points="815,323 830,325 830,329 816,327" fill="#472d12"/>
<polygon points="914,382 950,368 950,377 922,387" fill="#160e05"/>
<polygon points="912,377 948,363 948,371 920,382" fill="#754b1e"/>
<polygon points="746,358 773,350 773,359 751,365" fill="#160e05"/>
<polygon points="745,353 771,345 770,354 749,360" fill="#543515"/>
<polygon points="932,272 957,268 955,279 934,283" fill="#160e05"/>
<polygon points="930,265 955,262 954,273 933,276" fill="#291a0a"/>
<polygon points="809,377 838,369 840,377 812,384" fill="#160e05"/>
<polygon points="808,371 836,363 837,371 810,379" fill="#734a1e"/>
<polygon points="909,337 932,348 929,354 907,344" fill="#160e05"/>
<polygon points="908,331 931,341 927,347 906,337" fill="#4e3214"/>
<polygon points="821,377 839,379 835,386 821,385" fill="#160e05"/>
<polygon points="819,371 837,374 833,381 819,379" fill="#5d3c18"/>
<polygon points="878,348 907,342 909,357 884,362" fill="#160e05"/>
<polygon points="876,339 905,334 906,348 881,353" fill="#71481d"/>
<polygon points="971,274 1002,270 1002,281 974,285" fill="#160e05"/>
<polygon points="969,267 1000,263 1000,274 972,278" fill="#412910"/>
<polygon points="875,301 890,304 888,310 874,308" fill="#160e05"/>
<polygon points="873,297 888,299 885,306 872,304" fill="#2f1e0c"/>
<polygon points="713,356 741,360 737,374 713,371" fill="#160e05"/>
<polygon points="711,347 739,352 734,366 710,362" fill="#402910"/>
<polygon points="885,320 918,328 910,340 883,334" fill="#160e05"/>
<polygon points="884,313 917,321 909,333 881,326" fill="#5c3b18"/>
<polygon points="1018,375 1037,377 1034,389 1016,387" fill="#160e05"/>
<polygon points="1017,367 1035,369 1033,381 1015,379" fill="#69431b"/>
<polygon points="784,373 823,356 822,363 790,377" fill="#160e05"/>
<polygon points="782,368 820,351 820,358 788,372" fill="#573716"/>
<polygon points="824,349 858,357 856,371 825,364" fill="#160e05"/>
<polygon points="822,340 857,347 853,361 824,355" fill="#543515"/>
<polygon points="861,309 883,302 882,308 864,313" fill="#160e05"/>
<polygon points="859,305 881,298 880,303 863,309" fill="#3e2810"/>
<polygon points="718,376 740,378 738,382 718,381" fill="#160e05"/>
<polygon points="716,372 738,374 735,378 716,376" fill="#563716"/>
<polygon points="715,361 743,377 738,385 712,370" fill="#160e05"/>
<polygon points="712,353 741,369 737,377 711,362" fill="#4b3013"/>
<polygon points="757,343 771,340 771,349 760,351" fill="#160e05"/>
<polygon points="754,337 770,334 769,343 757,345" fill="#452c12"/>
<polygon points="966,344 990,355 983,363 965,353" fill="#160e05"/>
<polygon points="964,336 987,346 981,354 962,345" fill="#72491d"/>
<polygon points="705,368 725,373 723,380 705,375" fill="#160e05"/>
<polygon points="704,361 723,366 720,373 704,369" fill="#503315"/>
<polygon points="721,356 756,359 752,365 725,363" fill="#160e05"/>
<polygon points="720,351 755,354 750,360 724,357" fill="#533515"/>
<polygon points="865,332 889,328 888,336 869,339" fill="#160e05"/>
<polygon points="863,324 886,321 886,329 866,332" fill="#603e19"/>
<polygon points="765,347 800,355 794,360 769,353" fill="#160e05"/>
<polygon points="764,342 797,350 792,354 767,347" fill="#432b11"/>
<polygon points="827,352 847,360 842,369 826,362" fill="#160e05"/>
<polygon points="826,344 845,352 840,361 824,354" fill="#6f471c"/>
<polygon points="921,317 946,319 942,326 923,324" fill="#160e05"/>
<polygon points="919,311 944,313 940,320 920,318" fill="#523415"/>
<polygon points="739,353 781,367 774,375 738,362" fill="#160e05"/>
<polygon points="738,345 778,359 772,366 737,354" fill="#482e12"/>
<polygon points="973,334 1012,339 1008,349 973,343" fill="#160e05"/>
<polygon points="971,325 1011,331 1005,340 971,335" fill="#6a441b"/>
<polygon points="878,372 898,365 900,372 884,378" fill="#160e05"/>
<polygon points="877,366 895,359 897,366 881,372" fill="#70481d"/>
<polygon points="876,378 908,363 908,372 879,385" fill="#160e05"/>
<polygon points="874,373 907,358 907,367 877,380" fill="#623f19"/>
<polygon points="975,335 1014,325 1015,331 978,339" fill="#160e05"/>
<polygon points="974,330 1012,321 1013,326 977,335" fill="#72491d"/>
<polygon points="808,332 838,337 832,345 808,341" fill="#160e05"/>
<polygon points="806,326 837,331 831,339 805,336" fill="#4c3013"/>
<polygon points="906,314 926,317 920,333 905,330" fill="#160e05"/>
<polygon points="905,304 924,308 918,323 902,320" fill="#523415"/>
<polygon points="835,337 861,341 857,357 834,354" fill="#160e05"/>
<polygon points="832,328 860,331 855,347 831,345" fill="#492e13"/>
<polygon points="849,375 875,371 872,387 853,391" fill="#160e05"/>
<polygon points="847,367 872,363 870,379 850,382" fill="#72491d"/>
<polygon points="923,301 947,295 946,302 924,307" fill="#160e05"/>
<polygon points="920,296 945,290 944,297 922,302" fill="#533515"/>
<polygon points="1000,253 1025,257 1022,266 999,263" fill="#160e05"/>
<polygon points="999,247 1023,250 1021,260 997,256" fill="#422a11"/>
<polygon points="853,317 881,335 875,341 849,325" fill="#160e05"/>
<polygon points="851,310 879,328 872,333 848,317" fill="#5b3a17"/>
<polygon points="848,335 878,327 876,335 853,342" fill="#160e05"/>
<polygon points="846,330 877,321 875,330 850,337" fill="#623e19"/>
<polygon points="773,504 780,506 777,512 770,511" fill="#140e06"/>
<polygon points="771,500 777,502 774,507 769,506" fill="#694621"/>
<polygon points="572,474 581,471 582,474 574,476" fill="#140e06"/>
<polygon points="571,471 580,468 580,471 572,473" fill="#5f401e"/>
<polygon points="881,426 891,426 889,428 883,429" fill="#140e06"/>
<polygon points="880,424 888,423 888,425 880,426" fill="#31210f"/>
<polygon points="699,453 708,450 707,457 699,459" fill="#140e06"/>
<polygon points="696,448 706,445 706,452 697,455" fill="#60401e"/>
<polygon points="343,403 349,405 346,411 340,410" fill="#140e06"/>
<polygon points="341,398 348,401 344,407 338,405" fill="#3d2913"/>
<polygon points="672,491 683,493 683,497 672,496" fill="#140e06"/>
<polygon points="669,487 682,488 681,493 670,491" fill="#593c1c"/>
<polygon points="666,442 673,446 670,449 664,447" fill="#140e06"/>
<polygon points="664,439 672,442 669,446 662,443" fill="#2e1f0e"/>
<polygon points="548,467 553,462 555,466 552,470" fill="#140e06"/>
<polygon points="545,463 550,458 553,462 550,466" fill="#4b3217"/>
<polygon points="585,435 595,435 595,439 588,439" fill="#140e06"/>
<polygon points="584,431 594,431 593,435 585,435" fill="#382611"/>
<polygon points="627,527 635,523 636,525 630,528" fill="#140e06"/>
<polygon points="626,524 632,520 634,522 628,525" fill="#6c4922"/>
<polygon points="365,508 368,511 364,514 363,511" fill="#140e06"/>
<polygon points="363,504 366,507 363,510 360,507" fill="#5e3f1d"/>
<polygon points="621,493 634,499 630,504 620,499" fill="#140e06"/>
<polygon points="619,488 632,494 629,499 618,494" fill="#3b2712"/>
<polygon points="854,398 858,397 858,404 852,405" fill="#140e06"/>
<polygon points="851,394 856,393 855,399 851,400" fill="#3c2812"/>
<polygon points="618,473 631,471 629,475 619,476" fill="#140e06"/>
<polygon points="616,470 628,469 627,472 617,473" fill="#64431f"/>
<polygon points="602,511 608,511 606,517 602,517" fill="#140e06"/>
<polygon points="600,507 605,507 604,512 600,513" fill="#452e15"/>
<polygon points="738,519 744,524 740,528 735,524" fill="#140e06"/>
<polygon points="736,516 742,521 738,524 733,520" fill="#5d3f1d"/>
<polygon points="367,518 375,520 373,524 367,523" fill="#140e06"/>
<polygon points="365,514 373,515 372,520 364,518" fill="#593c1c"/>
<polygon points="393,435 405,436 403,438 392,437" fill="#140e06"/>
<polygon points="390,432 402,434 401,436 391,435" fill="#4b3317"/>
<polygon points="888,424 893,421 894,424 890,427" fill="#140e06"/>
<polygon points="885,420 891,417 892,420 887,423" fill="#422c14"/>
<polygon points="836,436 847,430 849,436 841,441" fill="#140e06"/>
<polygon points="835,432 846,426 847,432 839,437" fill="#362411"/>
<polygon points="517,434 524,432 525,434 519,437" fill="#140e06"/>
<polygon points="515,431 521,428 523,431 517,433" fill="#52371a"/>
<polygon points="985,511 992,510 992,512 986,513" fill="#140e06"/>
<polygon points="983,509 990,508 989,510 984,510" fill="#795126"/>
<polygon points="732,441 737,446 732,449 730,445" fill="#140e06"/>
<polygon points="731,437 735,441 731,444 727,441" fill="#30200f"/>
<polygon points="545,528 548,525 551,529 547,532" fill="#140e06"/>
<polygon points="542,524 546,521 549,525 546,528" fill="#422c14"/>
<polygon points="699,419 708,415 709,418 703,421" fill="#140e06"/>
<polygon points="698,415 707,411 707,414 700,417" fill="#3b2812"/>
<polygon points="729,406 734,412 731,413 727,408" fill="#140e06"/>
<polygon points="726,403 731,408 729,410 725,405" fill="#412c14"/>
<polygon points="745,500 754,494 757,497 749,503" fill="#140e06"/>
<polygon points="744,496 752,490 754,493 748,499" fill="#724d24"/>
<polygon points="344,517 354,523 350,525 343,521" fill="#140e06"/>
<polygon points="341,514 351,519 348,521 341,517" fill="#64431f"/>
<polygon points="565,442 568,443 569,448 564,447" fill="#140e06"/>
<polygon points="563,438 567,438 566,443 562,443" fill="#382611"/>
<polygon points="427,429 436,426 436,431 429,433" fill="#140e06"/>
<polygon points="425,425 434,422 435,427 428,429" fill="#372511"/>
<polygon points="536,439 548,439 548,444 537,445" fill="#140e06"/>
<polygon points="535,435 546,435 545,440 535,441" fill="#513719"/>
<polygon points="576,530 588,536 586,538 576,532" fill="#140e06"/>
<polygon points="574,526 586,533 584,535 573,529" fill="#483016"/>
<polygon points="666,519 670,518 671,520 667,521" fill="#140e06"/>
<polygon points="663,516 667,514 669,516 665,518" fill="#55391b"/>
<polygon points="992,413 1000,407 1003,412 993,417" fill="#140e06"/>
<polygon points="989,408 998,403 1001,407 992,412" fill="#2c1d0e"/>
<polygon points="519,539 522,535 524,538 522,541" fill="#140e06"/>
<polygon points="517,536 520,532 522,535 519,538" fill="#593c1c"/>
<polygon points="701,539 706,538 708,540 703,541" fill="#140e06"/>
<polygon points="700,536 705,535 706,537 701,538" fill="#452e15"/>
<polygon points="892,543 902,541 901,547 892,548" fill="#140e06"/>
<polygon points="891,539 899,537 900,543 891,544" fill="#805628"/>
<polygon points="436,417 446,412 446,415 437,419" fill="#140e06"/>
<polygon points="434,414 444,409 445,412 436,416" fill="#26190c"/>
<polygon points="350,427 359,429 358,433 349,431" fill="#140e06"/>
<polygon points="347,424 357,426 356,429 347,428" fill="#3e2a13"/>
<polygon points="563,532 569,534 565,540 559,537" fill="#140e06"/>
<polygon points="561,527 567,530 563,535 557,533" fill="#7c5427"/>
<polygon points="741,410 753,414 751,417 739,414" fill="#140e06"/>
<polygon points="738,407 751,410 749,413 738,410" fill="#281b0c"/>
<polygon points="679,433 685,427 687,431 680,436" fill="#140e06"/>
<polygon points="676,429 683,423 686,427 679,433" fill="#3e2a13"/>
<polygon points="900,421 909,428 905,432 896,426" fill="#140e06"/>
<polygon points="897,417 907,424 903,428 895,421" fill="#332210"/>
<polygon points="930,465 936,470 935,472 929,467" fill="#140e06"/>
<polygon points="928,462 934,467 933,469 927,464" fill="#3c2813"/>
<polygon points="900,411 910,418 907,421 899,415" fill="#140e06"/>
<polygon points="898,408 908,415 904,418 896,412" fill="#30200f"/>
<polygon points="787,394 796,400 793,401 784,397" fill="#140e06"/>
<polygon points="784,391 793,397 790,399 783,394" fill="#483016"/>
<polygon points="846,393 856,400 853,404 842,397" fill="#140e06"/>
<polygon points="844,389 854,396 851,400 841,393" fill="#3f2b14"/>
<polygon points="438,513 444,515 442,519 438,518" fill="#140e06"/>
<polygon points="436,509 442,511 440,515 435,514" fill="#6f4b23"/>
<polygon points="556,534 570,537 569,539 557,536" fill="#140e06"/>
<polygon points="555,531 568,534 567,536 556,533" fill="#85592a"/>
<polygon points="942,475 950,471 951,476 946,479" fill="#140e06"/>
<polygon points="941,470 948,467 950,471 944,474" fill="#402b14"/>
<polygon points="1006,489 1015,490 1013,493 1007,492" fill="#140e06"/>
<polygon points="1004,486 1012,486 1011,489 1005,488" fill="#432d15"/>
<polygon points="999,531 1006,530 1005,535 1000,536" fill="#140e06"/>
<polygon points="997,527 1004,527 1003,532 998,532" fill="#865a2a"/>
<polygon points="844,438 856,437 853,442 844,443" fill="#140e06"/>
<polygon points="841,434 853,433 852,438 843,439" fill="#4d3318"/>
<polygon points="515,497 523,499 521,501 515,499" fill="#140e06"/>
<polygon points="513,494 521,496 520,498 513,497" fill="#52371a"/>
<polygon points="413,396 421,395 420,397 413,398" fill="#140e06"/>
<polygon points="410,393 419,392 418,394 411,396" fill="#24180b"/>
<polygon points="1031,406 1039,406 1038,409 1032,409" fill="#140e06"/>
<polygon points="1030,403 1037,403 1036,406 1030,406" fill="#473016"/>
<polygon points="584,457 593,456 593,459 585,461" fill="#140e06"/>
<polygon points="582,454 590,452 591,456 583,457" fill="#4f3519"/>
<polygon points="969,541 980,545 977,548 967,545" fill="#140e06"/>
<polygon points="966,537 978,541 976,545 965,541" fill="#734d24"/>
<polygon points="483,509 494,510 490,517 482,516" fill="#140e06"/>
<polygon points="482,504 491,505 488,512 480,511" fill="#503619"/>
<polygon points="1038,415 1049,422 1047,423 1037,417" fill="#140e06"/>
<polygon points="1035,412 1046,419 1045,420 1035,414" fill="#3f2b14"/>
<polygon points="502,503 509,498 510,501 503,505" fill="#140e06"/>
<polygon points="499,499 507,494 508,497 501,501" fill="#775025"/>
<polygon points="676,415 686,413 687,418 680,419" fill="#140e06"/>
<polygon points="674,411 684,408 685,413 677,415" fill="#412c14"/>
<polygon points="731,541 738,539 739,543 733,545" fill="#140e06"/>
<polygon points="729,536 737,535 738,539 731,541" fill="#452e15"/>
<polygon points="337,444 345,450 345,451 338,446" fill="#140e06"/>
<polygon points="336,441 344,447 342,448 336,443" fill="#3c2813"/>
<polygon points="511,462 521,468 518,470 510,464" fill="#140e06"/>
<polygon points="509,459 519,465 517,467 508,462" fill="#5e3f1d"/>
<polygon points="547,454 558,462 552,464 545,458" fill="#140e06"/>
<polygon points="546,450 555,458 551,460 543,454" fill="#4f3519"/>
<polygon points="630,521 641,518 641,523 629,525" fill="#140e06"/>
<polygon points="627,517 640,514 639,519 628,521" fill="#473016"/>
<polygon points="838,394 850,395 848,397 840,396" fill="#140e06"/>
<polygon points="836,391 847,392 845,394 838,393" fill="#412b14"/>
<polygon points="366,404 370,403 372,407 368,408" fill="#140e06"/>
<polygon points="364,400 369,399 370,403 366,404" fill="#2a1c0d"/>
<polygon points="581,428 587,426 587,429 582,430" fill="#140e06"/>
<polygon points="579,424 585,422 585,425 580,427" fill="#281b0c"/>
<polygon points="960,507 971,507 970,512 962,512" fill="#140e06"/>
<polygon points="958,503 968,503 968,508 959,508" fill="#674520"/>
<polygon points="969,422 973,424 970,426 968,425" fill="#140e06"/>
<polygon points="966,418 970,421 968,423 965,421" fill="#281b0c"/>
<polygon points="860,457 867,464 864,466 860,460" fill="#140e06"/>
<polygon points="859,453 864,460 861,462 858,456" fill="#5f401e"/>
<polygon points="547,522 554,528 548,532 543,528" fill="#140e06"/>
<polygon points="545,518 553,523 546,527 540,524" fill="#422c14"/>
<polygon points="634,509 644,509 643,513 635,512" fill="#140e06"/>
<polygon points="632,505 642,506 641,509 633,508" fill="#452e15"/>
<polygon points="777,392 781,389 784,392 779,395" fill="#140e06"/>
<polygon points="775,388 780,385 782,388 777,391" fill="#271a0c"/>
<polygon points="908,500 919,505 917,507 908,503" fill="#140e06"/>
<polygon points="906,497 917,502 914,504 906,500" fill="#3a2712"/>
<polygon points="511,518 515,521 512,525 507,523" fill="#140e06"/>
<polygon points="509,514 514,517 510,521 505,519" fill="#664520"/>
<polygon points="679,541 686,542 684,545 680,545" fill="#140e06"/>
<polygon points="677,538 684,539 682,542 677,542" fill="#85592a"/>
<polygon points="803,490 809,485 813,489 807,494" fill="#140e06"/>
<polygon points="802,486 808,481 810,485 805,490" fill="#53381a"/>
<polygon points="557,411 567,411 568,416 557,416" fill="#140e06"/>
<polygon points="556,406 566,406 565,412 556,412" fill="#2c1d0d"/>
<polygon points="946,392 953,393 951,396 946,395" fill="#140e06"/>
<polygon points="945,388 950,390 950,393 944,391" fill="#402b14"/>
<polygon points="344,396 354,388 356,391 347,398" fill="#140e06"/>
<polygon points="343,392 353,385 355,387 345,394" fill="#23170b"/>
<polygon points="400,418 410,419 409,422 400,421" fill="#140e06"/>
<polygon points="398,415 408,416 407,419 398,418" fill="#2d1e0e"/>
<polygon points="764,417 772,418 772,420 765,419" fill="#140e06"/>
<polygon points="763,414 770,415 770,417 763,417" fill="#4d3418"/>
<polygon points="833,531 837,533 837,536 833,534" fill="#140e06"/>
<polygon points="832,528 835,530 834,533 831,530" fill="#53381a"/>
<polygon points="401,543 412,546 411,550 401,547" fill="#140e06"/>
<polygon points="398,538 409,542 408,545 398,542" fill="#5c3e1d"/>
<polygon points="1015,408 1024,411 1020,415 1014,413" fill="#140e06"/>
<polygon points="1014,404 1021,407 1019,411 1012,410" fill="#291c0d"/>
<polygon points="940,546 945,544 946,547 941,549" fill="#140e06"/>
<polygon points="938,543 944,540 945,543 940,545" fill="#754f25"/>
<polygon points="556,429 570,433 566,437 554,434" fill="#140e06"/>
<polygon points="554,425 567,429 564,433 552,430" fill="#2b1d0d"/>
<polygon points="606,440 615,435 616,437 608,442" fill="#140e06"/>
<polygon points="604,436 614,431 615,434 606,438" fill="#4b3217"/>
<polygon points="452,507 458,500 461,506 456,511" fill="#140e06"/>
<polygon points="449,503 456,496 459,501 454,507" fill="#775025"/>
<polygon points="588,409 596,401 597,404 591,410" fill="#140e06"/>
<polygon points="587,406 594,398 595,401 589,407" fill="#2c1e0e"/>
<polygon points="405,493 417,496 416,500 405,498" fill="#140e06"/>
<polygon points="404,489 415,492 414,496 403,493" fill="#593c1c"/>
<polygon points="329,463 336,462 335,467 328,468" fill="#140e06"/>
<polygon points="327,459 333,458 332,463 327,465" fill="#4b3317"/>
<polygon points="648,468 659,467 658,471 648,472" fill="#140e06"/>
<polygon points="645,464 657,464 657,468 647,468" fill="#64431f"/>
<polygon points="813,410 817,412 814,415 812,414" fill="#140e06"/>
<polygon points="810,406 815,408 813,412 809,410" fill="#3e2913"/>
<polygon points="670,410 673,407 677,412 673,414" fill="#140e06"/>
<polygon points="667,406 672,403 675,407 671,409" fill="#432d15"/>
<polygon points="425,512 431,512 430,513 426,513" fill="#140e06"/>
<polygon points="423,509 429,509 428,511 424,510" fill="#664420"/>
<polygon points="985,417 992,424 988,425 983,419" fill="#140e06"/>
<polygon points="982,414 989,421 987,422 981,416" fill="#4f3519"/>
<polygon points="419,474 432,474 430,480 419,480" fill="#140e06"/>
<polygon points="417,469 430,470 428,476 417,475" fill="#402b14"/>
<polygon points="848,460 852,462 852,464 848,462" fill="#140e06"/>
<polygon points="846,457 851,459 849,461 846,459" fill="#382611"/>
<polygon points="413,498 422,501 421,504 412,502" fill="#140e06"/>
<polygon points="410,494 420,497 419,500 411,498" fill="#694621"/>
<polygon points="789,442 796,445 793,449 789,446" fill="#140e06"/>
<polygon points="787,438 794,441 792,445 786,442" fill="#53381a"/>
<polygon points="987,434 993,437 993,438 987,436" fill="#140e06"/>
<polygon points="985,431 992,434 991,435 985,433" fill="#30200f"/>
<polygon points="663,418 670,419 668,424 661,422" fill="#140e06"/>
<polygon points="662,414 669,416 666,420 660,419" fill="#32220f"/>
<polygon points="895,484 898,482 900,486 897,488" fill="#140e06"/>
<polygon points="892,480 896,478 897,483 894,485" fill="#583b1b"/>
<polygon points="735,411 743,403 745,406 738,412" fill="#140e06"/>
<polygon points="732,408 741,400 742,403 735,409" fill="#3a2712"/>
<polygon points="867,493 875,488 877,493 871,497" fill="#140e06"/>
<polygon points="865,488 872,484 874,489 868,492" fill="#5f401e"/>
<polygon points="919,400 923,403 922,405 918,402" fill="#140e06"/>
<polygon points="917,397 922,401 920,402 916,399" fill="#281b0c"/>
<polygon points="935,514 939,516 935,520 932,519" fill="#140e06"/>
<polygon points="933,511 937,512 933,516 930,515" fill="#412b14"/>
<polygon points="466,463 473,459 475,463 470,467" fill="#140e06"/>
<polygon points="465,459 470,454 473,459 468,463" fill="#352310"/>
<polygon points="433,516 445,523 444,524 435,518" fill="#140e06"/>
<polygon points="431,513 443,520 441,521 432,515" fill="#704b23"/>
<polygon points="663,406 670,409 669,411 664,408" fill="#140e06"/>
<polygon points="662,403 668,406 667,408 661,405" fill="#3e2a13"/>
<polygon points="833,440 844,438 843,441 834,442" fill="#140e06"/>
<polygon points="831,437 841,435 840,438 833,439" fill="#2c1e0e"/>
<polygon points="550,444 557,447 554,449 550,447" fill="#140e06"/>
<polygon points="549,441 555,445 553,446 548,444" fill="#4a3217"/>
<polygon points="894,399 900,401 897,404 893,403" fill="#140e06"/>
<polygon points="892,396 897,398 895,401 891,399" fill="#402b14"/>
<polygon points="986,479 997,488 992,492 983,485" fill="#140e06"/>
<polygon points="984,474 995,483 990,488 981,480" fill="#3e2913"/>
<polygon points="465,533 477,528 476,533 466,537" fill="#140e06"/>
<polygon points="463,529 474,524 475,529 464,533" fill="#412c14"/>
<polygon points="849,442 855,441 856,443 850,444" fill="#140e06"/>
<polygon points="847,439 854,438 853,440 848,441" fill="#2d1e0e"/>
</g>
<defs><linearGradient id="gbeam" gradientUnits="userSpaceOnUse" x1="360" y1="419" x2="480" y2="538"><stop offset="0" stop-color="#cca870"/><stop offset="1" stop-color="#b98742"/></linearGradient>
<linearGradient id="gsand" gradientUnits="userSpaceOnUse" x1="322" y1="0" x2="440" y2="0"><stop offset="0" stop-color="#6e4418"/><stop offset=".25" stop-color="#96621e"/><stop offset="1" stop-color="#8c5a1c"/></linearGradient></defs>
<g filter="url(#b1)">
<polygon points="572,404 642,388 646,392 575,408" fill="#4a3012" fill-opacity=".8"/>
<polygon points="575,412 645,396 649,400 578,416" fill="#4a3012" fill-opacity=".8"/>
<polygon points="578,420 648,404 652,408 581,424" fill="#4a3012" fill-opacity=".8"/>
<polygon points="581,428 651,412 655,416 584,432" fill="#4a3012" fill-opacity=".8"/>
<polygon points="584,436 654,420 658,424 587,440" fill="#4a3012" fill-opacity=".8"/>
<polygon points="322,400 345,405 352,424 336,436 322,462" fill="#1a1006" fill-opacity=".7"/>
<polygon points="345.3,427.5 335.8,472 328.4,489 322,480.5 322,463.6 336.8,433.9" fill="#503214"/>
<polygon points="345.3,427.5 361.2,421.2 459.7,537.7 440.6,535.6 411,510.2 391.9,493.2 360.1,478.4 335.8,472" fill="#38210a"/>
<polygon points="335.8,472 360.1,478.4 391.9,493.2 411,510.2 436.4,527.1 445,538 412,533 382,533.6 352,530 322,525.2 322,480.5 328.4,489" fill="url(#gsand)"/>
<polygon points="359,420 364.4,417.6 498,538 460,539" fill="url(#gbeam)"/>
<polygon points="364.4,417.6 367.4,418.6 506,538 498,538" fill="#5a3e1c"/>
<polygon points="423.7,462.6 426,460.6 472,487 470,490" fill="#6a5838" fill-opacity=".8"/>
<polygon points="500,520 520,512 528,522 508,532" fill="#a87a3a"/>
<polygon points="478,468 492,462 498,474 484,480" fill="#8a6430"/>
<polygon points="898,418 921,413.7 925.7,416 923,428.4 901,430.3" fill="#a06c28"/>
<polygon points="921,413.7 925.7,416 923,428.4 919,427" fill="#5a3c16"/>
<polygon points="955.3,430.3 963.9,421.7 986.7,419.8 1011.5,417.9 1020,423.6 1013.4,440.7 1002,446.5 986.7,448.4 979.1,454.1 971.5,444.6 960,436.9" fill="#94601f"/>
<polygon points="958.1,457.9 967.7,451.2 979.1,454.1 986.7,460.8 982.9,471.2 975.3,477 963.9,475 957.2,467.4" fill="#a07236"/>
<polygon points="1013.4,449.3 1019.1,452.2 1021,471.2 1013.4,475 982.9,522.7 969.6,522.7 994.4,471.2" fill="#c49248"/>
<polygon points="1021,471.2 1013.4,475 982.9,522.7 990,523" fill="#5a3c16"/>
<polygon points="1038,470 1045,465 1045,525.5 1036,525.5" fill="#6a4820"/>
<polygon points="1022.9,417.8 1036.3,416.8 1037,421 1024,423" fill="#b88a40"/>
<polygon points="1021,431 1036,430 1036,435 1022,436" fill="#c09248"/>
<polygon points="1030.6,404.4 1043.9,394.9 1045,398 1032,408" fill="#946428"/>
<polygon points="880,432 900,425 902,428 882,436" fill="#8a6430"/>
<polygon points="930,332 974,318 985,345 941,357" fill="#70481a"/>
<polygon points="941,357 985,345 986,352 944,364" fill="#1c1006"/>
<polygon points="895,288 937,286 925,337 905,330" fill="#0a0603" fill-opacity=".75"/>
<rect x="698.5" y="219" width="14" height="132" fill="#170d05"/>
<rect x="700" y="350" width="12" height="6" fill="#8a8478" fill-opacity=".6"/>
</g>
</g>
</svg><svg class="abs" style="left:0;top:0" width="1209" height="708" viewBox="0 0 1209 708" font-family="'Liberation Sans',sans-serif">
<defs>
<radialGradient id="ball" cx="50%" cy="40%" r="60%"><stop offset="0" stop-color="#ffffff"/><stop offset="0.55" stop-color="#efefef"/><stop offset="0.8" stop-color="#d2d2d2"/><stop offset="1" stop-color="#949494"/></radialGradient>
<linearGradient id="gloss" x1="0" y1="0" x2="0" y2="1"><stop offset="0" stop-color="#fff" stop-opacity=".95"/><stop offset="1" stop-color="#fff" stop-opacity="0"/></linearGradient>
<clipPath id="cv"><rect x="322" y="81" width="723" height="585"/></clipPath>
</defs>
<g clip-path="url(#cv)">
<polyline points="322,371.6 386,372.7 485,376 584,378 685,379.3 812,372.3 911,370 1011,370 1045,370" fill="none" stroke="#2a2200" stroke-opacity=".7" stroke-width="3"/>
<polyline points="322,371.6 386,372.7 485,376 584,378 685,379.3 812,372.3 911,370 1011,370 1045,370" fill="none" stroke="#d0c030" stroke-width="1.3"/>
<rect x="322.1" y="359.8" width="29.3" height="24.3" fill="#1cf01c" stroke="#0a6a0a" stroke-width="1.4"/>
<text x="336.7" y="371.1" font-size="10.8" font-weight="bold" fill="#083008" text-anchor="middle">4.58</text>
<text x="336.7" y="381.0" font-size="9.6" fill="#063c06" text-anchor="middle">53</text>
<rect x="419.8" y="362.6" width="29.3" height="24.3" fill="#1cf01c" stroke="#0a6a0a" stroke-width="1.4"/>
<text x="434.4" y="373.9" font-size="10.8" font-weight="bold" fill="#083008" text-anchor="middle">4.60</text>
<text x="434.4" y="383.8" font-size="9.6" fill="#063c06" text-anchor="middle">51</text>
<rect x="518.4" y="365.6" width="29.3" height="24.3" fill="#1cf01c" stroke="#0a6a0a" stroke-width="1.4"/>
<text x="533.0" y="376.9" font-size="10.8" font-weight="bold" fill="#083008" text-anchor="middle">4.36</text>
<text x="533.0" y="386.8" font-size="9.6" fill="#063c06" text-anchor="middle">51</text>
<rect x="618.4" y="366.4" width="29.3" height="24.3" fill="#1cf01c" stroke="#0a6a0a" stroke-width="1.4"/>
<text x="633.0" y="377.7" font-size="10.8" font-weight="bold" fill="#083008" text-anchor="middle">4.36</text>
<text x="633.0" y="387.6" font-size="9.6" fill="#063c06" text-anchor="middle">61</text>
<rect x="734.3" y="362.4" width="29.3" height="24.3" fill="#1cf01c" stroke="#0a6a0a" stroke-width="1.4"/>
<text x="748.9" y="373.7" font-size="10.8" font-weight="bold" fill="#083008" text-anchor="middle">4.54</text>
<text x="748.9" y="383.6" font-size="9.6" fill="#063c06" text-anchor="middle">40</text>
<rect x="846.6" y="358.4" width="29.3" height="24.3" fill="#1cf01c" stroke="#0a6a0a" stroke-width="1.4"/>
<text x="861.2" y="369.7" font-size="10.8" font-weight="bold" fill="#083008" text-anchor="middle">4.52</text>
<text x="861.2" y="379.6" font-size="9.6" fill="#063c06" text-anchor="middle">54</text>
<rect x="945.6" y="357.2" width="29.3" height="24.3" fill="#1cf01c" stroke="#0a6a0a" stroke-width="1.4"/>
<text x="960.2" y="368.5" font-size="10.8" font-weight="bold" fill="#083008" text-anchor="middle">4.63</text>
<text x="960.2" y="378.4" font-size="9.6" fill="#063c06" text-anchor="middle">50</text>
<circle cx="386" cy="373.9" r="15.4" fill="#000" fill-opacity=".35"/>
<circle cx="386" cy="372.7" r="15" fill="url(#ball)"/>
<ellipse cx="386" cy="365.2" rx="9.5" ry="5.5" fill="url(#gloss)"/>
<text x="386.3" y="376.9" font-size="10.8" font-weight="bold" fill="#0c0c1c" text-anchor="middle">4</text>
<circle cx="485" cy="377.2" r="15.4" fill="#000" fill-opacity=".35"/>
<circle cx="485" cy="376" r="15" fill="url(#ball)"/>
<ellipse cx="485" cy="368.5" rx="9.5" ry="5.5" fill="url(#gloss)"/>
<text x="485.3" y="380.2" font-size="10.8" font-weight="bold" fill="#0c0c1c" text-anchor="middle">3</text>
<circle cx="584" cy="379.2" r="15.4" fill="#000" fill-opacity=".35"/>
<circle cx="584" cy="378" r="15" fill="url(#ball)"/>
<ellipse cx="584" cy="370.5" rx="9.5" ry="5.5" fill="url(#gloss)"/>
<text x="584.3" y="382.2" font-size="10.8" font-weight="bold" fill="#0c0c1c" text-anchor="middle">2</text>
<circle cx="684.2" cy="381.2" r="15.4" fill="#000" fill-opacity=".35"/>
<circle cx="684.2" cy="380" r="15" fill="url(#ball)"/>
<ellipse cx="684.2" cy="372.5" rx="9.5" ry="5.5" fill="url(#gloss)"/>
<circle cx="687" cy="379.5" r="15.4" fill="#000" fill-opacity=".35"/>
<circle cx="687" cy="378.3" r="15" fill="url(#ball)"/>
<ellipse cx="687" cy="370.8" rx="9.5" ry="5.5" fill="url(#gloss)"/>
<text x="687.5" y="382.5" font-size="10.8" font-weight="bold" fill="#0c0c1c" text-anchor="middle">8</text>
<circle cx="812" cy="373.5" r="15.4" fill="#000" fill-opacity=".35"/>
<circle cx="812" cy="372.3" r="15" fill="url(#ball)"/>
<ellipse cx="812" cy="364.8" rx="9.5" ry="5.5" fill="url(#gloss)"/>
<text x="812.3" y="376.5" font-size="10.8" font-weight="bold" fill="#0c0c1c" text-anchor="middle">7</text>
<circle cx="911" cy="371.2" r="15.4" fill="#000" fill-opacity=".35"/>
<circle cx="911" cy="370" r="15" fill="url(#ball)"/>
<ellipse cx="911" cy="362.5" rx="9.5" ry="5.5" fill="url(#gloss)"/>
<text x="911.3" y="374.2" font-size="10.8" font-weight="bold" fill="#0c0c1c" text-anchor="middle">6</text>
<circle cx="1011" cy="371.2" r="15.4" fill="#000" fill-opacity=".35"/>
<circle cx="1011" cy="370" r="15" fill="url(#ball)"/>
<ellipse cx="1011" cy="362.5" rx="9.5" ry="5.5" fill="url(#gloss)"/>
<text x="1011.3" y="374.2" font-size="10.8" font-weight="bold" fill="#0c0c1c" text-anchor="middle">5</text>
</g>
<rect x="0" y="372" width="1209" height="1" fill="#4a4a4a" fill-opacity=".7"/><rect x="0" y="373" width="1209" height="1" fill="#b6b6b6"/>
<rect x="682" y="81" width="2" height="585" fill="#8a8a8a"/>
<path d="M21.7,316.4 H163.5 V259.2 L303.7,375.75 L163.5,492.3 V436.5 H21.7 Z" fill="#fff" stroke="#000" stroke-width="5" stroke-miterlimit="10"/>
<g font-size="13.9" font-weight="bold" fill="#111">
<text x="53.2" y="357.6" textLength="159.2" lengthAdjust="spacingAndGlyphs">doch hier verstehe ich die</text>
<text x="53.2" y="375.6" textLength="171" lengthAdjust="spacingAndGlyphs">Reihenfolge nicht und weiß</text>
<text x="53.2" y="393.7" textLength="198.3" lengthAdjust="spacingAndGlyphs">auch nicht wie ich es ändern soll</text>
</g>
</svg>
<div id="zoombar" class="abs">
<svg class="abs" style="left:0;top:0" width="140" height="19" viewBox="0 666 140 19" font-family="'Liberation Sans',sans-serif">
<defs><linearGradient id="gspin" x1="0" y1="0" x2="0" y2="1"><stop offset="0" stop-color="#b8b8b8"/><stop offset="1" stop-color="#8c8c8c"/></linearGradient></defs>
<path d="M8.2,680 L15.8,680.6 L15.8,682.8 L7.6,681.4 Z" fill="#3cc040"/>
<circle cx="10.2" cy="673.6" r="5.7" fill="#3cc040"/>
<circle cx="10.2" cy="673.6" r="3.9" fill="#dde9f8"/>
<circle cx="10.2" cy="673.6" r="1.7" fill="#4a5258"/>
<circle cx="34.8" cy="675.1" r="5" fill="#b9b9b9"/>
<rect x="32.2" y="674.2" width="5.2" height="1.9" fill="#fff"/>
<rect x="45.5" y="666.7" width="73" height="17" fill="url(#gspin)" stroke="#0a0a0a" stroke-width="1"/>
<text x="48.6" y="680" font-size="12" fill="#0a0a0a" textLength="32.4" lengthAdjust="spacingAndGlyphs">4,91%</text>
<path d="M104,674 L109,668.8 L114.2,674 Z M104,676.2 L114.2,676.2 L109,681.4 Z" fill="#1e1e1e"/>
<circle cx="127.7" cy="675.1" r="5" fill="#b9b9b9"/>
<path d="M125,675.1H130.4M127.7,672.4V677.8" stroke="#fff" stroke-width="2" fill="none"/>
</svg>

</div>
<div id="status" class="abs"><div id="statustext" class="abs">X Min/Max(0 / 14713)  --  Y Min/Max(0 / 11905)  --  Theta Min/Max(-180.00 / 180.00)</div></div>
<div id="whitebot" class="abs"></div>
</body>
</html>
